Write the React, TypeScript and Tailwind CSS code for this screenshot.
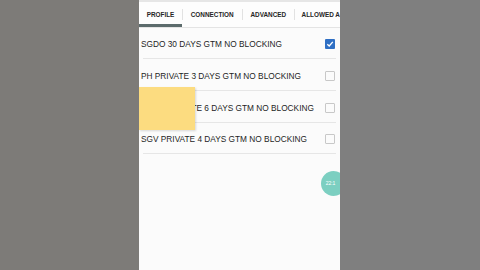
import React from "react";

const rows = [
  { label: "SGDO 30 DAYS GTM NO BLOCKING", checked: true },
  { label: "PH PRIVATE 3 DAYS GTM NO BLOCKING", checked: false },
  { label: "SGDO PRIVATE 6 DAYS GTM NO BLOCKING", checked: false },
  { label: "SGV PRIVATE 4 DAYS GTM NO BLOCKING", checked: false },
];

export default function App() {
  return (
    <div className="flex h-[270px] w-[480px] overflow-hidden" style={{ fontFamily: '"Liberation Sans", Arial, sans-serif' }}>
      <div className="h-full w-[139px] bg-[#7d7b78]" />
      <div className="relative h-full w-[201px] overflow-hidden bg-[#fbfbfb]">
        <div className="h-[2px] bg-[#e6e6e6]" />
        <div className="flex h-[25.5px] items-stretch border-b border-[#e4e4e4] bg-[#fdfdfd] text-[6.4px] font-bold text-[#262626]">
          <div className="relative flex w-[43px] shrink-0 items-center justify-center pt-[1px]">
            PROFILE
            <div className="absolute bottom-0 left-0 h-[3px] w-full bg-[#5c6b6c]" />
          </div>
          <div className="my-[7px] w-px bg-[#e2e2e2]" />
          <div className="flex w-[60px] shrink-0 items-center justify-center pt-[1px]">CONNECTION</div>
          <div className="my-[7px] w-px bg-[#e2e2e2]" />
          <div className="flex w-[52px] shrink-0 items-center justify-center pt-[1px]">ADVANCED</div>
          <div className="my-[7px] w-px bg-[#e2e2e2]" />
          <div className="flex shrink-0 items-center whitespace-nowrap pl-[7px] pt-[1px]">ALLOWED A</div>
        </div>
        <div className="flex flex-col">
          {rows.map((r) => (
            <div key={r.label} className="mx-[4px] flex h-[31.7px] items-center justify-between border-b border-[#e6e6e6] pt-[3px]">
              <span className="-ml-[2px] whitespace-nowrap text-[8.3px] text-[#1e1e1e]">{r.label}</span>
              {r.checked ? (
                <div className="mr-[1px] flex h-[10px] w-[10px] items-center justify-center rounded-[1px] bg-[#2f6fc4]">
                  <svg width="8" height="8" viewBox="0 0 8 8">
                    <path d="M1.3 4.2 L3.2 6 L6.8 1.8" fill="none" stroke="#fff" strokeWidth="1.3" />
                  </svg>
                </div>
              ) : (
                <div className="mr-[1px] h-[10px] w-[10px] rounded-[1px] border border-[#c8c8c8]" />
              )}
            </div>
          ))}
        </div>
        <div className="absolute left-0 top-[87px] h-[43px] w-[56px] bg-[#fcdc80] shadow-[1px_1px_2px_rgba(0,0,0,0.15)]" />
        <div className="absolute left-[182px] top-[171px] flex h-[25px] w-[25px] items-center justify-center rounded-full bg-[#7ccfc1] text-[5px] text-white">
          <span className="-ml-[6px]">22:1</span>
        </div>
      </div>
      <div className="h-full flex-1 bg-[#7f7f7f]" />
    </div>
  );
}
